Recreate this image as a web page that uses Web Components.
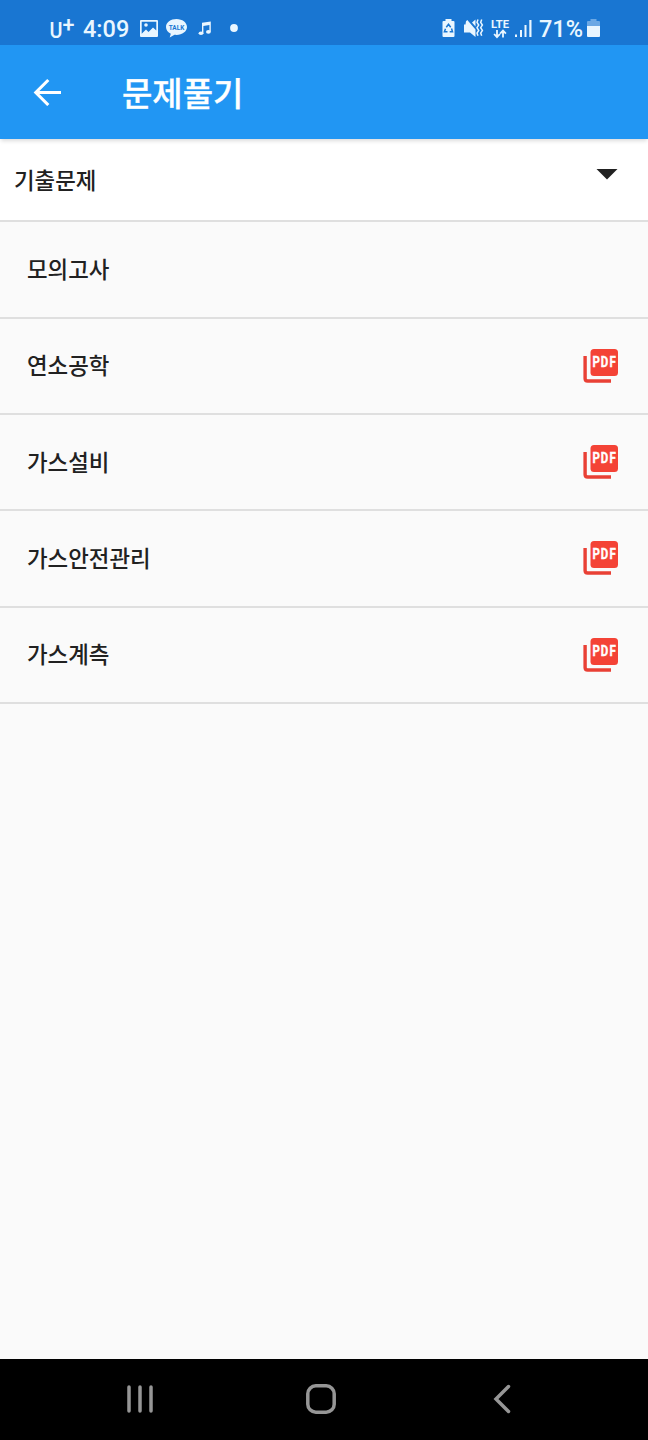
<!DOCTYPE html>
<html lang="ko">
<head>
<meta charset="utf-8">
<title>문제풀기</title>
<style>
    html, body {
        margin: 0;
        height: 100%;
    }
    body {
        font-family: Roboto, "Noto Sans CJK KR", sans-serif;
        background: #fafafa;
        color: #212121;
    }
</style>
</head>
<body>
<phone-screen>
    <status-bar slot="status" time="4:09" battery="71%"></status-bar>
    <app-bar slot="header">문제풀기</app-bar>
    <expansion-header>기출문제</expansion-header>
    <subject-row>모의고사</subject-row>
    <subject-row pdf>연소공학</subject-row>
    <subject-row pdf>가스설비</subject-row>
    <subject-row pdf>가스안전관리</subject-row>
    <subject-row pdf>가스계측</subject-row>
    <nav-bar slot="nav"></nav-bar>
</phone-screen>

<script>
class PhoneScreen extends HTMLElement {
    constructor() {
        super();
        this.attachShadow({ mode: 'open' });
        this.shadowRoot.innerHTML = `
            <style>
                :host {
                    display: flex;
                    flex-direction: column;
                    height: 1440px;
                    overflow: hidden;
                }
                main {
                    flex: 1;
                    min-height: 0;
                }
            </style>
            <slot name="status"></slot>
            <slot name="header"></slot>
            <main><slot></slot></main>
            <slot name="nav"></slot>
        `;
    }
}

class StatusBar extends HTMLElement {
    constructor() {
        super();
        this.attachShadow({ mode: 'open' });
    }

    connectedCallback() {
        this.shadowRoot.innerHTML = `
            <style>
                :host {
                    display: flex;
                    justify-content: space-between;
                    box-sizing: border-box;
                    height: 45px;
                    flex: none;
                    padding: 12px 48px 0 49px;
                    background: #1976d2;
                    color: #e9f6ff;
                    font-size: 23.5px;
                    line-height: 33px;
                    font-weight: 500;
                }
                .group {
                    display: flex;
                    align-items: center;
                }
                svg {
                    display: block;
                    fill: currentColor;
                    flex: none;
                }
                .time {
                    width: 47px;
                    margin: 0 10px 0 8px;
                    padding-top: 1px;
                }
                .level {
                    width: 44px;
                    margin: 0 3px 0 7px;
                    padding: 1px 1px 0 0;
                    white-space: nowrap;
                    font-size: 23.5px;
                }
            </style>
            <div class="group">
                <svg width="26" height="33" viewBox="0 0 26 33">
                    <text x="0.500" y="26" font-size="22" font-weight="500" textLength="13" lengthAdjust="spacingAndGlyphs">U</text>
                    <text x="13.500" y="19.500" font-size="22" font-weight="500" textLength="12" lengthAdjust="spacingAndGlyphs">+</text>
                </svg>
                <span class="time">${this.getAttribute('time')}</span>
                <svg width="18" height="33" viewBox="0 0 18 33">
                    <path fill-rule="evenodd" d="M1 8h16q1 0 1 1v15q0 1-1 1H1q-1 0-1-1V9q0-1 1-1zM1.700 9.700v12l4.300-4.200 2.500 2.500 4.500-4.500 3.300 3V9.700z"/>
                    <circle cx="6" cy="13" r="1.800"/>
                </svg>
                <svg width="21" height="33" viewBox="0 0 21 33" style="margin-left:8px">
                    <path d="M10.500 7C4.700 7 0 10.500 0 15c0 2.900 1.900 5.300 4.800 6.700L3.700 25.600 8.500 22.800c.6.100 1.300.1 2 .1 5.800 0 10.500-3.500 10.500-7.900S16.300 7 10.500 7z"/>
                    <text x="2.700" y="17.900" font-size="8" font-weight="700" fill="#1976d2" textLength="15.600" lengthAdjust="spacingAndGlyphs">TALK</text>
                </svg>
                <svg width="13" height="33" viewBox="0 0 13 33" style="margin-left:11px">
                    <path d="M4 10.800L12.800 9.500V19.800H11.400V13L5.400 14V21.500H4z"/>
                    <ellipse cx="3" cy="21.300" rx="2.400" ry="1.800"/>
                    <ellipse cx="10.400" cy="19.900" rx="2.400" ry="1.800"/>
                </svg>
                <svg width="8" height="33" viewBox="0 0 8 33" style="margin-left:19px"><circle cx="4" cy="16" r="3.900"/></svg>
            </div>
            <div class="group">
                <svg width="14" height="33" viewBox="0 0 14 33">
                    <path d="M3.500 7h6v2h2q1 0 1 1v14q0 1-1 1h-10q-1 0-1-1V10q0-1 1-1h2z"/>
                    <path d="M4.300 15.300L6.500 12.300l2.200 3M9.500 16.500l1 3.200H7.700M5.500 19.700H2.400l1.100-3" fill="none" stroke="#1976d2" stroke-width="1.500"/>
                </svg>
                <svg width="20" height="33" viewBox="0 0 20 33" style="margin-left:8px">
                    <path d="M0 12.500h1.500L2 9.200 3.300 8 11.500 17.500V25L6 20.500H0zM8 10.500L11.500 7.500v7z"/>
                    <path d="M14 7.500l-1 2.800 1.700 2.700-1.700 2.700 1.700 2.700-1.700 2.700 1 2.600M17.700 7.500l-1 2.800 1.700 2.700-1.700 2.700 1.700 2.700-1.700 2.700 1 2.600" fill="none" stroke="currentColor" stroke-width="1.500"/>
                </svg>
                <svg width="19" height="33" viewBox="0 0 19 33" style="margin-left:7px">
                    <text x="0" y="15.500" font-size="11.500" font-weight="700" textLength="18" lengthAdjust="spacingAndGlyphs">LTE</text>
                    <path d="M6 18v7M3.100 22l2.900 3.200L8.900 22M12 25.500v-7M9.100 21.700l2.900-3.200 2.900 3.200" fill="none" stroke="currentColor" stroke-width="1.800"/>
                </svg>
                <svg width="17" height="33" viewBox="0 0 17 33" style="margin-left:5px">
                    <path d="M0 22.500h2V25H0zM5 18h2v7H5zM9.500 13h2v12h-2zM14.300 8h2.200v17h-2.200z"/>
                </svg>
                <span class="level">${this.getAttribute('battery')}</span>
                <svg width="13" height="33" viewBox="0 0 13 33">
                    <path d="M3.500 7h6v2H12q1 0 1 1v4H0v-4q0-1 1-1h2.500z" opacity=".4"/>
                    <path d="M0 14h13v10q0 1-1 1H1q-1 0-1-1z"/>
                </svg>
            </div>
        `;
    }
}

class AppBar extends HTMLElement {
    constructor() {
        super();
        this.attachShadow({ mode: 'open' });
        this.shadowRoot.innerHTML = `
            <style>
                :host {
                    display: flex;
                    align-items: center;
                    box-sizing: border-box;
                    flex: none;
                    height: 94px;
                    padding-left: 33px;
                    background: #2196f3;
                    color: #fff;
                    box-shadow: 0 3px 4px -1px rgba(0, 0, 0, 0.14);
                    position: relative;
                    z-index: 1;
                }
                h1 {
                    margin: 0 0 0 60px;
                    font: 500 33px/48px "Noto Sans CJK KR", sans-serif;
                    -webkit-text-stroke: 0.3px;
                }
            </style>
            <svg width="29" height="28" viewBox="0 0 29 28" fill="none" stroke="#fff" stroke-width="3.100">
                <path d="M28 14.500H3M15.300 2L2.800 14.500l12.500 12.500"/>
            </svg>
            <h1><slot></slot></h1>
        `;
    }
}

class ExpansionHeader extends HTMLElement {
    constructor() {
        super();
        this.attachShadow({ mode: 'open' });
        this.shadowRoot.innerHTML = `
            <style>
                :host {
                    display: flex;
                    justify-content: space-between;
                    box-sizing: border-box;
                    height: 83.400px;
                    padding: 24px 30px 0 14px;
                    background: #fff;
                    border-bottom: 2px solid #dfdfdf;
                    font: 500 22.400px/32px "Noto Sans CJK KR", sans-serif;
                }
                svg {
                    display: block;
                    margin-top: 6px;
                }
            </style>
            <span><slot></slot></span>
            <svg width="22" height="11" viewBox="0 0 22 11"><path d="M.5 0h21L11 10.500z" fill="#212121"/></svg>
        `;
    }
}

class SubjectRow extends HTMLElement {
    constructor() {
        super();
        this.attachShadow({ mode: 'open' });
    }

    connectedCallback() {
        const icon = this.hasAttribute('pdf') ? `
            <svg width="36" height="36" viewBox="0 0 36 36">
                <path d="M2.100 8v22.500q0 2.500 2.500 2.500H28" fill="none" stroke="#e94035" stroke-width="3.400"/>
                <rect x="7.500" y="1" width="27.500" height="27" rx="3.500" fill="#f44336"/>
                <text transform="scale(.82 1)" x="11.500 21.600 32.200" y="19">PDF</text>
            </svg>` : '';
        this.shadowRoot.innerHTML = `
            <style>
                :host {
                    display: flex;
                    align-items: center;
                    justify-content: space-between;
                    box-sizing: border-box;
                    height: 96.300px;
                    padding: 0 29px 0 27px;
                    border-bottom: 2px solid #dfdfdf;
                    font: 500 22.400px/32px "Noto Sans CJK KR", sans-serif;
                }
                span {
                    padding-bottom: 3px;
                }
                svg {
                    display: block;
                }
                text {
                    font: 700 14px Roboto, sans-serif;
                    fill: #fff;
                    stroke: #fff;
                    stroke-width: 0.4px;
                }
            </style>
            <span><slot></slot></span>
            ${icon}
        `;
    }
}

class NavBar extends HTMLElement {
    constructor() {
        super();
        this.attachShadow({ mode: 'open' });
        this.shadowRoot.innerHTML = `
            <style>
                :host {
                    display: flex;
                    align-items: center;
                    box-sizing: border-box;
                    flex: none;
                    height: 81px;
                    padding: 0 0 2px 126px;
                    background: #000;
                }
                svg {
                    fill: none;
                    stroke: #969696;
                    stroke-width: 3.500;
                    stroke-linecap: round;
                }
                .home {
                    margin: 0 157px 0 152px;
                }
            </style>
            <svg width="28" height="30" viewBox="0 0 28 30"><path d="M3 3v24M14 3v24M25 3v24"/></svg>
            <svg class="home" width="30" height="30" viewBox="0 0 30 30"><rect x="1.800" y="1.800" width="26.400" height="26.400" rx="8"/></svg>
            <svg width="18" height="30" viewBox="0 0 18 30"><path d="M15.500 2.500L3 15 15.500 27.500"/></svg>
        `;
    }
}

customElements.define('phone-screen', PhoneScreen);
customElements.define('status-bar', StatusBar);
customElements.define('app-bar', AppBar);
customElements.define('expansion-header', ExpansionHeader);
customElements.define('subject-row', SubjectRow);
customElements.define('nav-bar', NavBar);
</script>
</body>
</html>
